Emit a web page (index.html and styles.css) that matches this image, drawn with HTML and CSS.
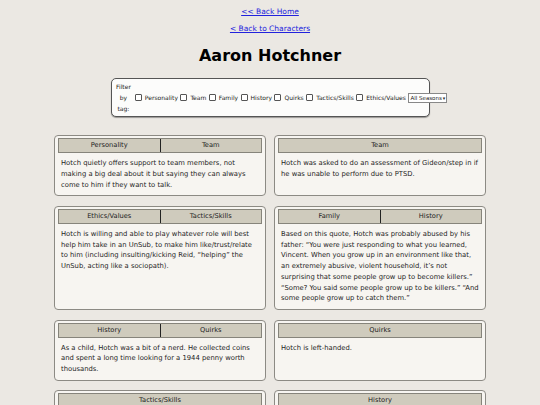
FILE: index.html
```html
<!DOCTYPE html>
<html>
<head>
<meta charset="utf-8">
<link rel="stylesheet" href="styles.css">
</head>
<body>
<nav class="links">
  <a href="#">&lt;&lt; Back Home</a>
  <a href="#">&lt; Back to Characters</a>
</nav>
<h1 class="title">Aaron Hotchner</h1>
<div class="filter">
  <span class="filter-label">Filter by tag:</span>
  <label class="opt"><span class="box"></span>Personality</label>
  <label class="opt"><span class="box"></span>Team</label>
  <label class="opt"><span class="box"></span>Family</label>
  <label class="opt"><span class="box"></span>History</label>
  <label class="opt"><span class="box"></span>Quirks</label>
  <label class="opt"><span class="box"></span>Tactics/Skills</label>
  <label class="opt"><span class="box"></span>Ethics/Values</label>
  <span class="select">All Seasons <span class="caret">&#9662;</span></span>
</div>
<main class="grid">
  <section class="card">
    <div class="tags"><span>Personality</span><span>Team</span></div>
    <p>Hotch quietly offers support to team members, not making a big deal about it but saying they can always come to him if they want to talk.</p>
  </section>
  <section class="card">
    <div class="tags"><span>Team</span></div>
    <p>Hotch was asked to do an assessment of Gideon/step in if he was unable to perform due to PTSD.</p>
  </section>
  <section class="card">
    <div class="tags"><span>Ethics/Values</span><span>Tactics/Skills</span></div>
    <p>Hotch is willing and able to play whatever role will best help him take in an UnSub, to make him like/trust/relate to him (including insulting/kicking Reid, “helping” the UnSub, acting like a sociopath).</p>
  </section>
  <section class="card">
    <div class="tags"><span>Family</span><span>History</span></div>
    <p>Based on this quote, Hotch was probably abused by his father: “You were just responding to what you learned, Vincent. When you grow up in an environment like that, an extremely abusive, violent household, it’s not surprising that some people grow up to become killers.” “Some? You said some people grow up to be killers.” “And some people grow up to catch them.”</p>
  </section>
  <section class="card">
    <div class="tags"><span>History</span><span>Quirks</span></div>
    <p>As a child, Hotch was a bit of a nerd. He collected coins and spent a long time looking for a 1944 penny worth thousands.</p>
  </section>
  <section class="card">
    <div class="tags"><span>Quirks</span></div>
    <p>Hotch is left-handed.</p>
  </section>
  <section class="card">
    <div class="tags"><span>Tactics/Skills</span></div>
    <p>Hotch is a skilled negotiator and interrogator.</p>
  </section>
  <section class="card">
    <div class="tags"><span>History</span></div>
    <p>Hotch was a prosecutor before joining the FBI.</p>
  </section>
</main>
</body>
</html>
```

FILE: styles.css
```css
html, body {
  margin: 0;
  padding: 0;
}
body {
  background: #ebe8e3;
  font-family: "DejaVu Sans", Verdana, sans-serif;
  color: #1a1a1a;
  padding-top: 7px;
}
.links {
  display: flex;
  flex-direction: column;
  align-items: center;
  gap: 7px;
  font-size: 7.5px;
  line-height: 10px;
}
.links a {
  color: #2222dd;
}
.title {
  margin: 0;
  margin-top: 12px;
  text-align: center;
  font-size: 16px;
  line-height: 20px;
  font-weight: bold;
  color: #000;
}
.filter {
  width: 309px;
  margin: 12px 0 0 111px;
  height: 35px;
  box-sizing: content-box;
  border: 1.5px solid #555;
  border-radius: 5px;
  background: #fcfcfb;
  box-shadow: 0 1px 1px rgba(0,0,0,0.35);
  display: flex;
  align-items: center;
  padding: 1px 4px;
  font-size: 6px;
  color: #222;
  white-space: nowrap;
}
.filter-label {
  width: 17px;
  white-space: normal;
  text-align: center;
  line-height: 11px;
  margin-right: 4px;
}
.opt {
  display: flex;
  align-items: center;
  margin-right: 2.5px;
}
.box {
  width: 5px;
  height: 5px;
  border: 0.8px solid #555;
  border-radius: 1px;
  background: #fff;
  margin-right: 3px;
}
.select {
  display: inline-flex;
  align-items: center;
  border: 0.8px solid #888;
  background: #fff;
  height: 8px;
  padding: 0 1px;
  font-size: 5.5px;
  flex-shrink: 0;
}
.caret {
  font-size: 5px;
  margin-left: 1px;
}
.grid {
  width: 432px;
  margin: 18px auto 0;
  display: grid;
  grid-template-columns: 1fr 1fr;
  column-gap: 8px;
  row-gap: 9.5px;
}
.card {
  background: #f7f5f1;
  border: 1px solid #8c8a84;
  border-radius: 4px;
  padding: 2px 3px 5px;
}
.tags {
  display: flex;
  background: #cfcbbd;
  border: 1px solid #86847b;
  height: 13px;
}
.tags span {
  flex: 1;
  text-align: center;
  font-size: 6.7px;
  line-height: 13px;
  color: #222;
}
.tags span + span {
  border-left: 1px solid #222;
}
.card p {
  margin: 5px 3px 0;
  font-size: 6.8px;
  line-height: 10.75px;
  color: #1e1e1e;
}
```
